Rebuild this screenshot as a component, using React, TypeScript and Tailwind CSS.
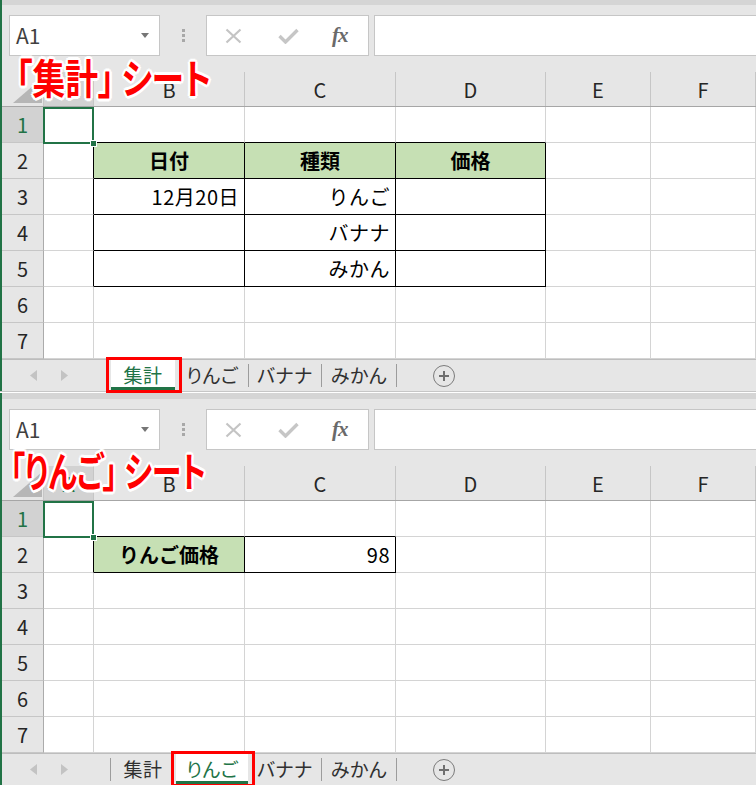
import React from "react";

type CellData = { text: string; head?: boolean };

type SheetData = {
  label: [string, string];
  labelCls: string;
  active: number;
  strip: string;
  table: (r: number, c: number) => boolean;
  cells: Record<string, CellData>;
};

const COLS = [
  { name: "A", w: "w-[50px]" },
  { name: "B", w: "w-[151px]" },
  { name: "C", w: "w-[151px]" },
  { name: "D", w: "w-[150px]" },
  { name: "E", w: "w-[105px]" },
  { name: "F", w: "flex-1" },
];
const ROWS = [1, 2, 3, 4, 5, 6, 7];
const TABS = ["集計", "りんご", "バナナ", "みかん"];
const TAB_W = ["w-[64px]", "w-[72px]", "w-[72px]", "w-[74px]"];

const summary: SheetData = {
  label: ["「集計」", "シート"],
  labelCls: "left-[14px] scale-x-[0.8]",
  active: 0,
  strip: "h-[5px]",
  table: (r, c) => r >= 2 && r <= 5 && c >= 1 && c <= 3,
  cells: {
    "2-1": { text: "日付", head: true },
    "2-2": { text: "種類", head: true },
    "2-3": { text: "価格", head: true },
    "3-1": { text: "12月20日" },
    "3-2": { text: "りんご" },
    "4-2": { text: "バナナ" },
    "5-2": { text: "みかん" },
  },
};

const apple: SheetData = {
  label: ["「りんご」", "シート"],
  labelCls: "left-[8px] scale-x-[0.73]",
  active: 1,
  strip: "h-[6px]",
  table: (r, c) => r === 2 && c >= 1 && c <= 2,
  cells: {
    "2-1": { text: "りんご価格", head: true },
    "2-2": { text: "98" },
  },
};

function Toolbar() {
  return (
    <div className="h-[67px] shrink-0 flex items-start pt-[10px] pl-[7px]">
      {/* Name box */}
      <div className="relative w-[151px] h-[41px] shrink-0 bg-white border border-[#c6c6c6] flex items-center pl-[6px] text-[21px] text-[#404040]">
        A1
        <svg className="absolute right-[10px] top-[17px]" width="8" height="5" viewBox="0 0 8 5">
          <polygon points="0,0 8,0 4,5" fill="#767676" />
        </svg>
      </div>
      {/* grip dots */}
      <div className="w-[46px] h-[41px] shrink-0 flex flex-col items-center justify-center gap-[2px]">
        <div className="w-[3px] h-[3px] bg-[#a8a8a8]" />
        <div className="w-[3px] h-[3px] bg-[#a8a8a8]" />
        <div className="w-[3px] h-[3px] bg-[#a8a8a8]" />
      </div>
      {/* cancel / enter / fx */}
      <div className="w-[163px] h-[41px] shrink-0 bg-white border border-[#c6c6c6] flex items-center pl-[18px]">
        <svg width="17" height="16" viewBox="0 0 17 16">
          <path d="M1.5 1.5 L15.5 14.5 M15.5 1.5 L1.5 14.5" stroke="#c4c4c4" strokeWidth="2.2" fill="none" />
        </svg>
        <svg className="ml-[36px]" width="21" height="16" viewBox="0 0 21 16">
          <path d="M1.5 8 L7.5 14 L19.5 2" stroke="#c6c6c6" strokeWidth="3.4" fill="none" />
        </svg>
        <span className="ml-[33px] font-['Liberation_Serif',serif] italic font-bold text-[21px] leading-none text-[#6a6a6a] tracking-[-1px]">
          fx
        </span>
      </div>
      {/* formula input */}
      <div className="ml-[5px] flex-1 h-[41px] bg-white border border-r-0 border-[#c6c6c6]" />
    </div>
  );
}

function ColumnHeader() {
  return (
    <div className="h-[35px] shrink-0 flex border-b border-b-[#a6a6a6]">
      <div className="w-[42px] shrink-0 border-r border-r-[#c6c6c6] relative">
        <svg className="absolute left-0 top-0" width="42" height="34" viewBox="0 0 42 34">
          <polygon points="11,31 40,31 40,6" fill="#b6b6b6" />
        </svg>
      </div>
      {COLS.map((col, i) => (
        <div
          key={col.name}
          className={`${col.w} shrink-0 border-r border-r-[#c6c6c6] flex items-center justify-center text-[20px] pt-[2px] ${
            i === 0 ? "bg-[#d2d2d2] text-[#217346]" : "text-[#262626]"
          }`}
        >
          {col.name}
        </div>
      ))}
    </div>
  );
}

function Row({ r, sheet }: { r: number; sheet: SheetData }) {
  return (
    <div className="h-[36px] shrink-0 flex">
      <div
        className={`w-[42px] shrink-0 border-r border-r-[#ababab] border-b border-b-[#c6c6c6] flex items-center justify-center text-[20px] ${
          r === 1 ? "bg-[#d2d2d2] text-[#217346]" : "bg-[#e6e6e6] text-[#262626]"
        }`}
      >
        {r}
      </div>
      {COLS.map((col, c) => {
        const cell = sheet.cells[`${r}-${c}`];
        const rightDark = sheet.table(r, c) || sheet.table(r, c + 1);
        const bottomDark = sheet.table(r, c) || sheet.table(r + 1, c);
        return (
          <div
            key={col.name}
            className={`${col.w} shrink-0 relative flex items-center border-r border-b text-[20px] text-black ${
              rightDark ? "border-r-black" : "border-r-[#d4d4d4]"
            } ${bottomDark ? "border-b-black" : "border-b-[#d4d4d4]"} ${
              cell?.head ? "bg-[#c6e0b4] font-bold justify-center" : "bg-white justify-end pr-[5px] tracking-[0.5px]"
            }`}
          >
            {cell?.text}
            {r === 1 && c === 0 && (
              <div className="absolute -left-px top-0 -right-px -bottom-[2px] border-2 border-[#217346] z-10">
                <div className="absolute -right-[5px] -bottom-[5px] w-[7px] h-[7px] bg-[#217346] border border-white" />
              </div>
            )}
          </div>
        );
      })}
    </div>
  );
}

function Sep({ show }: { show: boolean }) {
  return <div className={`w-px h-[23px] mt-[4px] shrink-0 ${show ? "bg-[#9c9c9c]" : ""}`} />;
}

function TabBar({ active }: { active: number }) {
  return (
    <div className="h-[32px] shrink-0 flex items-start border-t border-t-[#bdbdbd] relative">
      <div className="w-[108px] h-[30px] shrink-0 flex items-center pl-[28px] gap-[24px]">
        <svg width="7" height="11" viewBox="0 0 7 11">
          <polygon points="7,0 7,11 0,5.5" fill="#c3c3c3" />
        </svg>
        <svg width="7" height="11" viewBox="0 0 7 11">
          <polygon points="0,0 0,11 7,5.5" fill="#c3c3c3" />
        </svg>
      </div>
      {TABS.map((t, i) => (
        <React.Fragment key={t}>
          <Sep show={i !== active && i - 1 !== active} />
          <div
            className={`${TAB_W[i]} h-[30px] shrink-0 relative flex items-center justify-center text-[19px] [font-feature-settings:'palt'] tracking-[0.5px] ${
              i === active ? "bg-white text-[#217346] border-b-[3px] border-b-[#217346] pt-[3px]" : "text-[#303030]"
            }`}
          >
            {t}
            {i === active && (
              <div className="absolute -left-[5px] -right-[7px] -top-[3px] -bottom-[6px] border-[3px] border-[#ff0000] z-30" />
            )}
          </div>
        </React.Fragment>
      ))}
      <Sep show={TABS.length - 1 !== active} />
      <div className="ml-[36px] mt-[5px] w-[22px] h-[22px] shrink-0 rounded-full border-[1.5px] border-[#7b7b7b] flex items-center justify-center">
        <svg width="12" height="12" viewBox="0 0 12 12">
          <path d="M6 1 V11 M1 6 H11" stroke="#6f6f6f" strokeWidth="2" />
        </svg>
      </div>
    </div>
  );
}

function Sheet({ sheet, h }: { sheet: SheetData; h: string }) {
  return (
    <div className={`relative ${h} flex flex-col border-l-2 border-l-[#217346] bg-[#e6e6e6]`}>
      <div className={`${sheet.strip} shrink-0 bg-[#d5d5d5]`} />
      <Toolbar />
      <ColumnHeader />
      {ROWS.map((r) => (
        <Row key={r} r={r} sheet={sheet} />
      ))}
      <TabBar active={sheet.active} />
      {/* annotation */}
      <div
        className={`absolute ${sheet.labelCls} origin-left top-[56px] z-40 flex whitespace-nowrap text-[41px] leading-none font-bold text-[#ff0000] [font-feature-settings:'palt'] [text-shadow:2px_2px_0_#fff,-2px_-2px_0_#fff,2px_-2px_0_#fff,-2px_2px_0_#fff,0_3px_0_#fff,0_-3px_0_#fff,3px_0_0_#fff,-3px_0_0_#fff]`}
      >
        <span>{sheet.label[0]}</span>
        <span className="ml-[9px]">{sheet.label[1]}</span>
      </div>
    </div>
  );
}

export default function App() {
  return (
    <div className="w-[756px] h-[785px] overflow-hidden bg-[#e6e6e6] font-['Noto_Sans_CJK_JP','Noto_Sans',sans-serif]">
      <Sheet sheet={summary} h="h-[391px]" />
      <div className="h-[2px] border-t border-t-[#c6c6c6] bg-white" />
      <Sheet sheet={apple} h="h-[392px]" />
    </div>
  );
}
